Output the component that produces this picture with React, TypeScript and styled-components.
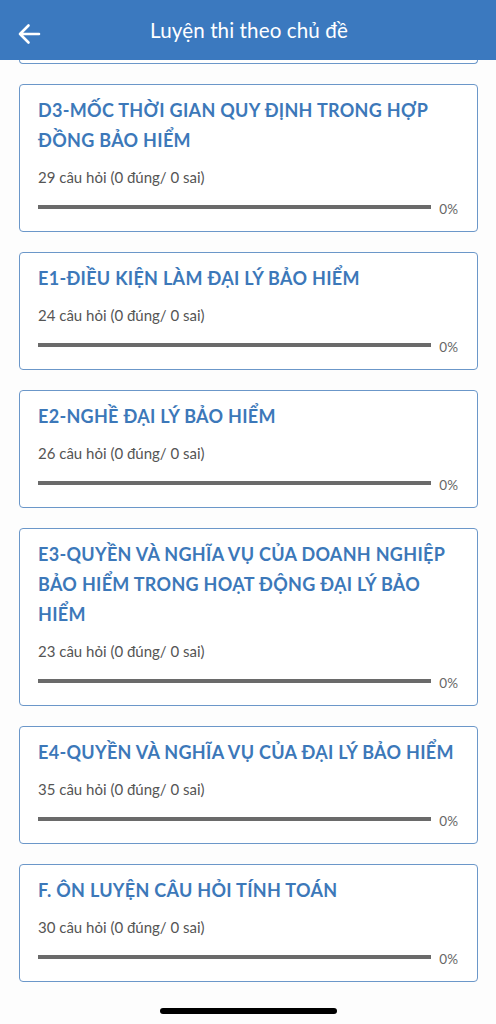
import React from "react";
import styled, { createGlobalStyle } from "styled-components";

type Topic = {
  title: string;
  total: number;
};

const topics: Topic[] = [
  { title: "D3-MỐC THỜI GIAN QUY ĐỊNH TRONG HỢP ĐỒNG BẢO HIỂM", total: 29 },
  { title: "E1-ĐIỀU KIỆN LÀM ĐẠI LÝ BẢO HIỂM", total: 24 },
  { title: "E2-NGHỀ ĐẠI LÝ BẢO HIỂM", total: 26 },
  {
    title: "E3-QUYỀN VÀ NGHĨA VỤ CỦA DOANH NGHIỆP BẢO HIỂM TRONG HOẠT ĐỘNG ĐẠI LÝ BẢO HIỂM",
    total: 23,
  },
  { title: "E4-QUYỀN VÀ NGHĨA VỤ CỦA ĐẠI LÝ BẢO HIỂM", total: 35 },
  { title: "F. ÔN LUYỆN CÂU HỎI TÍNH TOÁN", total: 30 },
];

const GlobalStyle = createGlobalStyle`
  html, body {
    margin: 0;
    padding: 0;
    background: #fdfdfd;
  }
  body {
    font-family: Lato, "Open Sans", sans-serif;
  }
`;

const BackIcon = () => (
  <svg width="24" height="22" viewBox="0 0 24 22" fill="none">
    <path
      d="M22 11H3M11.5 2.5L3 11l8.5 8.5"
      stroke="#fff"
      strokeWidth="2.6"
      strokeLinecap="round"
      strokeLinejoin="round"
    />
  </svg>
);

const App: React.FC = () => {
  return (
    <Screen>
      <GlobalStyle />
      <Header>
        <BackButton>
          <BackIcon />
        </BackButton>
        <HeaderTitle>Luyện thi theo chủ đề</HeaderTitle>
      </Header>
      <List>
        <CardTail />
        {topics.map((topic) => (
          <Card key={topic.title}>
            <Title>{topic.title}</Title>
            <Stats>{topic.total} câu hỏi (0 đúng/ 0 sai)</Stats>
            <ProgressRow>
              <Track>
                <Fill style={{ width: "0%" }} />
              </Track>
              <Percent>0%</Percent>
            </ProgressRow>
          </Card>
        ))}
      </List>
      <HomeBar />
    </Screen>
  );
};

const Screen = styled.div`
  width: 496px;
  height: 1024px;
  overflow: hidden;
  display: flex;
  flex-direction: column;
  background: #fdfdfd;
`;

const Header = styled.header`
  flex: 0 0 auto;
  height: 60px;
  background: #3b79bf;
  display: flex;
  align-items: center;
  justify-content: center;
  position: relative;
  z-index: 1;
`;

const BackButton = styled.div`
  position: absolute;
  left: 17px;
  top: 23px;
  display: flex;
`;

const HeaderTitle = styled.h1`
  margin: 0;
  padding-left: 2px;
  color: #fff;
  font-size: 20.6px;
  font-weight: 400;
  letter-spacing: 0.1px;
`;

const List = styled.div`
  display: flex;
  flex-direction: column;
  gap: 20px;
  padding: 0 18px 0 19px;
`;

const CardTail = styled.div`
  height: 3px;
  border: 1px solid #6b97c9;
  border-top: none;
  border-radius: 0 0 4px 4px;
  background: #fff;
`;

const Card = styled.div`
  border: 1px solid #6b97c9;
  border-radius: 4px;
  background: #fff;
  padding: 10px 18px 16px 18px;
  display: flex;
  flex-direction: column;
`;

const Title = styled.div`
  color: #3c78b9;
  font-size: 18px;
  font-weight: 700;
  line-height: 30px;
  letter-spacing: 0.3px;
`;

const Stats = styled.div`
  margin-top: 12px;
  color: #555;
  font-size: 15px;
  line-height: 20px;
`;

const ProgressRow = styled.div`
  margin-top: 12px;
  height: 16px;
  display: flex;
  align-items: center;
  gap: 8px;
`;

const Track = styled.div`
  flex: 1;
  height: 4px;
  background: #6a6a6a;
  position: relative;
`;

const Fill = styled.div`
  position: absolute;
  left: 0;
  top: 0;
  bottom: 0;
  background: #3c78b9;
`;

const Percent = styled.span`
  flex: 0 0 auto;
  color: #666;
  font-size: 13.5px;
  line-height: 16px;
  padding-top: 4px;
  margin-right: 1px;
`;

const HomeBar = styled.div`
  margin: auto auto 10px;
  width: 177px;
  height: 6px;
  border-radius: 3px;
  background: #000;
`;

export default App;
